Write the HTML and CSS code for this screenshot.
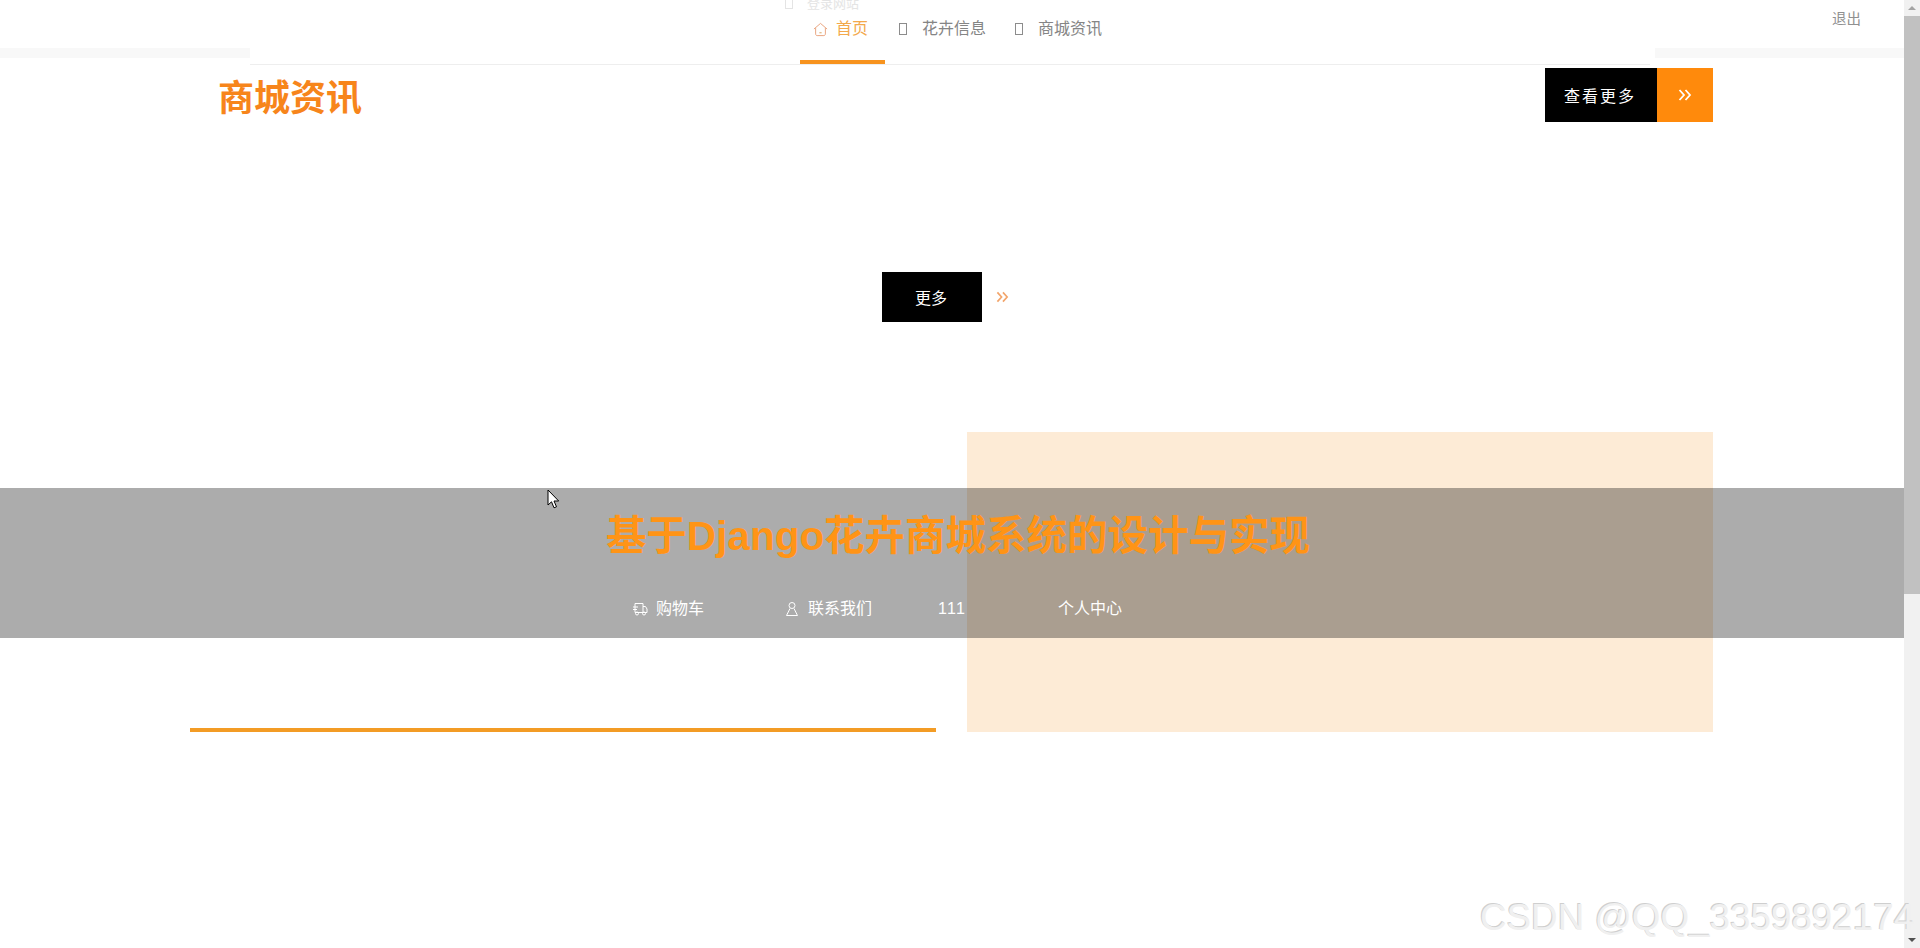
FILE: index.html
```html
<!DOCTYPE html>
<html lang="zh-CN">
<head>
  <meta charset="UTF-8" />
  <title>基于Django花卉商城系统的设计与实现</title>
  <link rel="stylesheet" href="styles.css">
</head>
<body>
  <div class="page">
    <div class="main">
      <header class="topbar">
        <div class="ghost-row">
          <i class="tofu ghost-box"></i>
          <span>登录网站</span>
        </div>
        <div class="strip strip-left"></div>
        <div class="strip strip-right"></div>
        <nav class="nav">
          <a class="nav-item active">
            <svg class="nav-icon" viewBox="0 0 16 16" width="15" height="15" fill="none" stroke="#e8a07a" stroke-width="1">
              <path d="M1 7.500 8 1.500l7 6"/>
              <path d="M2.800 6.500v6.200c0 1 .6 1.800 1.600 1.800h7.200c1 0 1.600-.8 1.600-1.800V6.500"/>
              <path d="M6.800 11.500h2.400" stroke="#d9a05a"/>
            </svg>
            首页
          </a>
          <a class="nav-item"><i class="tofu"></i>花卉信息</a>
          <a class="nav-item"><i class="tofu"></i>商城资讯</a>
        </nav>
        <a class="logout">退出</a>
      </header>

      <section class="content">
        <div class="section-head">
          <h2 class="section-title">商城资讯</h2>
          <a class="more-big">
            <span class="more-big-text">查看更多</span>
            <span class="more-big-arrow">
              <svg viewBox="0 0 14 12" width="14" height="12" fill="none" stroke="#fff" stroke-width="1.800">
                <path d="M1.500 1 6 6l-4.500 5"/>
                <path d="M7.500 1 12 6l-4.500 5"/>
              </svg>
            </span>
          </a>
        </div>

        <div class="more-row">
          <a class="more-small">更多</a>
          <svg class="more-arrows" viewBox="0 0 14 12" width="13" height="12" fill="none" stroke="#f3a56b" stroke-width="1.800">
            <path d="M1.500 1 6 6l-4.500 5"/>
            <path d="M7.500 1 12 6l-4.500 5"/>
          </svg>
        </div>

        <div class="columns">
          <div class="col-left"></div>
          <div class="col-right"></div>
        </div>
      </section>

      <div class="banner">
        <h1 class="banner-title">基于Django花卉商城系统的设计与实现</h1>
        <div class="banner-nav">
          <a class="banner-link link-cart">
            <svg viewBox="0 0 16 14" width="16" height="14" fill="none" stroke="#fff" stroke-width="1">
              <path d="M3 1.500h8v9H3z"/>
              <path d="M11 4.500h2.500l1.500 2.500v3.500h-4"/>
              <path d="M1 5h5M1 7.500h4"/>
              <circle cx="5" cy="11.500" r="1.500"/>
              <circle cx="12" cy="11.500" r="1.500"/>
            </svg>
            购物车
          </a>
          <a class="banner-link link-contact">
            <svg viewBox="0 0 14 16" width="14" height="16" fill="none" stroke="#fff" stroke-width="1">
              <circle cx="7" cy="4.500" r="3"/>
              <path d="M5 7.500 1.500 14.500h11L9 7.500"/>
            </svg>
            联系我们
          </a>
          <a class="banner-link link-num">111</a>
          <a class="banner-link">个人中心</a>
        </div>
      </div>

      <svg class="cursor" viewBox="0 0 13 20" width="13" height="20">
        <path d="M1 1v15l3.500-3.200 2.500 6 2.500-1-2.500-5.800h4.700z" fill="#fff" stroke="#000" stroke-width="1"/>
      </svg>

      <div class="watermark">CSDN @QQ_3359892174</div>
    </div>

    <div class="scrollbar">
      <span class="scroll-up"></span>
      <div class="scroll-track"><div class="scroll-thumb"></div></div>
      <span class="scroll-down"></span>
    </div>
  </div>
</body>
</html>
```

FILE: styles.css
```css
html, body {
  margin: 0;
  padding: 0;
  height: 100%;
  overflow: hidden;
}

body {
  background: #fff;
  color: #666;
  font-family: "Liberation Sans", "Noto Sans CJK SC", sans-serif;
  font-size: 16px;
}

a {
  color: inherit;
  text-decoration: none;
}

.page {
  display: flex;
  height: 948px;
}

.main {
  position: relative;
  z-index: 1;
  flex: 1;
  min-width: 0;
}

/* top nav */
.topbar {
  position: relative;
  height: 65px;
  box-sizing: border-box;
  display: flex;
  padding-left: 800px;
}

.topbar::after {
  content: "";
  position: absolute;
  left: 250px;
  right: 254px;
  bottom: 0;
  height: 1px;
  background: #eee;
}

.ghost-row {
  position: absolute;
  left: 785px;
  top: -7px;
  display: flex;
  align-items: center;
  gap: 14px;
  font-size: 13px;
  color: #e4e4e4;
}

.strip {
  position: absolute;
  top: 48px;
  height: 10px;
  background: #f8f8f8;
}

.strip-left {
  left: 0;
  width: 250px;
}

.strip-right {
  left: 1655px;
  right: 0;
}

.nav {
  display: flex;
}

.nav-item {
  display: flex;
  align-items: center;
  height: 60px;
  padding: 0 15px 2px 14px;
  box-sizing: border-box;
  line-height: 1;
  color: #858585;
}

.nav-item.active {
  width: 85px;
  height: 64px;
  padding: 0 0 2px 13px;
  color: #f3a94c;
  border-bottom: 4px solid #f7931e;
}

.nav-icon {
  margin-right: 8px;
}

.tofu {
  display: inline-block;
  width: 6px;
  height: 10px;
  border: 1px solid #8c8c8c;
  margin-right: 15px;
}

.ghost-box {
  border-color: #e4e4e4;
  margin: 0;
}

.logout {
  position: absolute;
  left: 1832px;
  top: 7px;
  font-size: 14.500px;
  color: #909090;
}

/* content */
.content {
  width: 1523px;
  margin-left: 190px;
}

.section-head {
  display: flex;
  justify-content: space-between;
  align-items: center;
  height: 54px;
  margin-top: 3px;
  padding-left: 28px;
}

.section-title {
  margin: 8px 0 0;
  font-size: 36px;
  font-weight: bold;
  color: #f7851b;
  line-height: 54px;
}

.more-big {
  display: flex;
  height: 54px;
}

.more-big-text {
  width: 112px;
  display: flex;
  align-items: center;
  justify-content: center;
  background: #000;
  color: #fff;
  letter-spacing: 2px;
  padding-right: 2px;
  box-sizing: border-box;
}

.more-big-arrow {
  width: 56px;
  display: flex;
  align-items: center;
  justify-content: center;
  background: #ff8a0c;
}

.more-row {
  display: flex;
  align-items: center;
  margin-top: 150px;
  padding-left: 692px;
}

.more-small {
  width: 100px;
  height: 50px;
  box-sizing: border-box;
  padding-right: 2px;
  display: flex;
  align-items: center;
  justify-content: center;
  background: #000;
  color: #fff;
}

.more-arrows {
  margin-left: 14px;
}

.columns {
  display: grid;
  grid-template-columns: 746px 746px;
  gap: 31px;
  margin-top: 110px;
}

.col-left {
  height: 300px;
  box-sizing: border-box;
  border-bottom: 4px solid #f39c25;
}

.col-right {
  height: 300px;
  background: #fdebd6;
}

/* grey banner over the page */
.banner {
  position: absolute;
  left: 0;
  right: 0;
  top: 488px;
  height: 150px;
  background: rgba(0, 0, 0, 0.325);
  text-align: center;
}

.banner-title {
  margin: 20px 0 0 12px;
  font-size: 40.500px;
  font-weight: bold;
  line-height: 56px;
  color: #ff9416;
}

.banner-nav {
  display: flex;
  align-items: center;
  margin-top: 33px;
  padding-left: 632px;
  color: #fff;
}

.banner-link {
  display: flex;
  align-items: center;
  gap: 8px;
  line-height: 24px;
}

.link-cart {
  width: 153px;
  gap: 8px;
}

.link-contact {
  width: 153px;
  gap: 9px;
}

.link-num {
  width: 120px;
  letter-spacing: 1.300px;
}

.cursor {
  position: absolute;
  left: 547px;
  top: 489px;
}

.watermark {
  position: absolute;
  left: 1480px;
  top: 898px;
  font-size: 36.800px;
  line-height: 40px;
  white-space: nowrap;
  color: #f0f0f0;
  text-shadow: -1px -1px 0 #cfcfcf;
}

/* scrollbar */
.scrollbar {
  width: 16px;
  display: flex;
  flex-direction: column;
  align-items: center;
  background: #f1f1f1;
}

.scroll-up,
.scroll-down {
  width: 0;
  height: 0;
  border-left: 4px solid transparent;
  border-right: 4px solid transparent;
  margin: 6px 0;
}

.scroll-up {
  border-bottom: 4px solid #a3a3a3;
}

.scroll-down {
  border-top: 4px solid #505050;
}

.scroll-track {
  flex: 1;
  width: 100%;
}

.scroll-thumb {
  height: 578px;
  background: #c1c1c1;
}
```
